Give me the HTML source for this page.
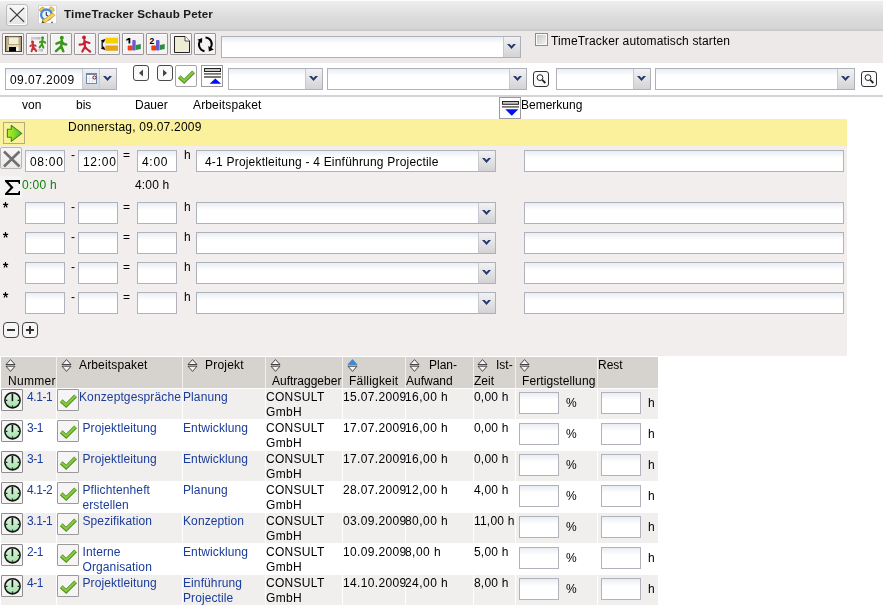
<!DOCTYPE html>
<html><head><meta charset="utf-8">
<style>
*{box-sizing:border-box;margin:0;padding:0}
html,body{width:883px;height:606px;overflow:hidden;background:#fff;font-family:"Liberation Sans",sans-serif;font-size:12px;color:#000}
.a{position:absolute}
.a>svg{position:absolute;left:0;top:0}
.t{position:absolute;white-space:pre;line-height:14px;will-change:transform}
.trg{position:absolute;right:0;top:0;width:17px;height:100%;border-left:1px solid #c6c9cf;background:linear-gradient(#f2f2f4,#d3d3d7)}
.trg svg{position:absolute;left:0;top:0}
.lnk{color:#1a3c9a}
</style></head><body>

<div class="a" style="left:0px;top:0px;width:883px;height:31px;background:linear-gradient(#fcfcfc 0,#fcfcfc 1px,#eeeeee 1px,#dcdcdc 17px,#d5d5d5 29px,#cbcbcb 29px,#cbcbcb 31px);"></div>
<div class="a" style="left:6px;top:4px;width:22px;height:22px;border:1px solid #bdbdbd;border-radius:3px;background:linear-gradient(#f8f8f8,#e4e4e4);box-shadow:inset -1px -1px 0 #fff;"><svg width="20" height="20"><path d="M2.9 2.9 L17.1 16.9 M17.1 2.9 L2.9 16.9" stroke="#3a3a3a" stroke-width="1.3"/></svg></div>
<div class="a" style="left:38px;top:5px;width:19px;height:19px;background:#fff;border:1px solid #d4d4d4;"><svg width="17" height="17" viewBox="1 1 17 17"><ellipse cx="3.9" cy="4.4" rx="2.7" ry="1.8" transform="rotate(-40 3.9 4.4)" fill="#f2c850" stroke="#d0a030" stroke-width="0.7"/><ellipse cx="13.8" cy="4.2" rx="2.7" ry="1.8" transform="rotate(40 13.8 4.2)" fill="#f2c850" stroke="#d0a030" stroke-width="0.7"/><circle cx="8.4" cy="9.8" r="5.3" fill="#eef6fe" stroke="#4a8ad0" stroke-width="2.3"/><path d="M8.3 6.8 V10 L10 11.2" stroke="#334" stroke-width="1.1" fill="none"/><path d="M4.4 15.6 L14.8 8 L16.8 10.4 L6.6 18 Z" fill="#f6d65a" stroke="#d09a28" stroke-width="0.8"/><path d="M4.4 15.6 L3.4 18.6 L6.6 18 Z" fill="#5a4a3a"/><circle cx="14" cy="17.5" r="0.9" fill="#556"/></svg></div>
<div class="t" style="left:64px;top:7px;font-size:12px;font-weight:bold;color:#1a1a1a;letter-spacing:0.15px;font-size:11.6px">TimeTracker Schaub Peter</div>
<div class="a" style="left:0px;top:31px;width:883px;height:32px;background:#ece9e8;"></div>
<div class="a" style="left:2px;top:33px;width:22px;height:22px;border:1px solid #999799;border-radius:1px;background:#f4f2f2;box-shadow:inset 1px 1px 0 #fff;"><svg width="20" height="20"><defs><linearGradient id="fl" x1="0" x2="1"><stop offset="0" stop-color="#9a8a60"/><stop offset="0.22" stop-color="#e4dcbc"/><stop offset="0.78" stop-color="#e4dcbc"/><stop offset="1" stop-color="#9a8a60"/></linearGradient></defs><rect x="2.5" y="2.5" width="16" height="15" fill="url(#fl)" stroke="#4a4030" stroke-width="1"/><rect x="5.5" y="3" width="10.5" height="7.5" fill="#f2eed8" stroke="#a89870" stroke-width="0.8"/><rect x="6" y="13" width="7" height="4.5" fill="#000"/><rect x="13.3" y="13.3" width="2" height="3.5" fill="#fff"/></svg></div>
<div class="a" style="left:26px;top:33px;width:22px;height:22px;border:1px solid #999799;border-radius:1px;background:#f4f2f2;box-shadow:inset 1px 1px 0 #fff;"><svg width="20" height="20"><defs><linearGradient id="gb" x1="0" x2="1"><stop offset="0" stop-color="#d8d8d8"/><stop offset="1" stop-color="#b8b8b8"/></linearGradient></defs><rect x="4" y="3" width="9.5" height="2.5" fill="url(#gb)"/><rect x="4" y="3" width="1.5" height="6" fill="#ccc"/><rect x="11" y="15" width="5" height="2.5" fill="url(#gb)"/><g stroke="#c83038" stroke-width="2" fill="none" stroke-linecap="round" stroke-linejoin="round"><circle cx="5.6" cy="8" r="1.5" fill="#c83038" stroke="none"/><path d="M5.7 9.6 L6 13 L4.6 17.2 M6 13 L9.3 17 M3.4 12 L5.8 10.6 L8.6 11.8"/></g><g stroke="#3c9a1c" stroke-width="2" fill="none" stroke-linecap="round" stroke-linejoin="round"><circle cx="15.6" cy="3.8" r="1.5" fill="#3c9a1c" stroke="none"/><path d="M15.5 5.4 L15 10 L12.6 13.4 M15 10 L16.4 13.6 M13 8.2 L15.4 6.8 L18.2 8.6"/></g></svg></div>
<div class="a" style="left:50px;top:33px;width:22px;height:22px;border:1px solid #999799;border-radius:1px;background:#f4f2f2;box-shadow:inset 1px 1px 0 #fff;"><svg width="20" height="20"><circle cx="10.8" cy="3.8" r="2" fill="#3a9818"/><g stroke="#3a9818" stroke-width="2.5" fill="none" stroke-linecap="round" stroke-linejoin="round"><path d="M10.8 6.2 L10.2 12.3 L5 17.2 M10.2 12.3 L12.3 17.2 M5.4 9.6 L10.6 7.6 L13 10 L15.2 10.4"/></g></svg></div>
<div class="a" style="left:74px;top:33px;width:22px;height:22px;border:1px solid #999799;border-radius:1px;background:#f4f2f2;box-shadow:inset 1px 1px 0 #fff;"><svg width="20" height="20"><circle cx="9" cy="3.5" r="1.9" fill="#c42030"/><g stroke="#c42030" stroke-width="2.1" fill="none" stroke-linecap="round" stroke-linejoin="round"><path d="M9.4 6 L10 12.8 L7.3 17.6 M10 12.8 L11.8 15 L15.2 17.6 M4.6 10.6 L8 10.2 L9.6 7.6 L14.5 9"/></g></svg></div>
<div class="a" style="left:98px;top:33px;width:22px;height:22px;border:1px solid #999799;border-radius:1px;background:#f4f2f2;box-shadow:inset 1px 1px 0 #fff;"><svg width="20" height="20"><rect x="6.4" y="3.7" width="12.6" height="5.8" fill="#f8d000"/><rect x="6.4" y="11.5" width="12.6" height="5.3" fill="#e0a818"/><path d="M3.2 6.5 V14.5" stroke="#222" stroke-width="1.4" fill="none"/><path d="M2 6.3 L6.4 5 L4.8 8.8Z M2 14.7 L6.4 16 L4.8 12.2Z" fill="#000"/></svg></div>
<div class="a" style="left:122px;top:33px;width:22px;height:22px;border:1px solid #999799;border-radius:1px;background:#f4f2f2;box-shadow:inset 1px 1px 0 #fff;"><svg width="20" height="20"><path d="M3.3 5.2 L5.6 3.9 H7.3 V9.6 H5.5 V6 L3.3 6.8Z" fill="#000"/><rect x="4.7" y="11.5" width="5" height="5" rx="1" fill="#f04010"/><rect x="9.3" y="6" width="3.4" height="10.5" rx="1" fill="#6a5ad0"/><path d="M12.9 11 L17.8 9.9 V15 L12.9 16Z" fill="#2a9040"/></svg></div>
<div class="a" style="left:146px;top:33px;width:22px;height:22px;border:1px solid #999799;border-radius:1px;background:#f4f2f2;box-shadow:inset 1px 1px 0 #fff;"><svg width="20" height="20"><text x="2.6" y="9.6" font-family="Liberation Sans" font-weight="bold" font-size="8.5" fill="#000">2</text><rect x="4.3" y="11.5" width="5" height="5" rx="1" fill="#f04010"/><rect x="9" y="6" width="3.5" height="10.5" rx="1" fill="#6a5ad0"/><path d="M12.8 11 L17.7 10 V15 L12.8 16Z" fill="#2a9040"/></svg></div>
<div class="a" style="left:170px;top:33px;width:22px;height:22px;border:1px solid #999799;border-radius:1px;background:#f4f2f2;box-shadow:inset 1px 1px 0 #fff;"><svg width="20" height="20"><path d="M3.5 2.5 H14 L18.5 7 V18.5 H3.5 Z" fill="#ededd5" stroke="#222" stroke-width="1"/><path d="M14 2.5 V7 H18.5" fill="#fff" stroke="#222" stroke-width="0.8"/></svg></div>
<div class="a" style="left:194px;top:33px;width:22px;height:22px;border:1px solid #999799;border-radius:1px;background:#f4f2f2;box-shadow:inset 1px 1px 0 #fff;"><svg width="20" height="20"><g fill="none" stroke="#000" stroke-width="2"><path d="M5.5 6.5 A6.6 6.6 0 0 0 9.5 17.2"/><path d="M10.5 3.4 A6.6 6.6 0 0 1 15.3 14"/></g><path d="M2.4 5.7 L7.2 3.9 L7 8.9Z" fill="#000"/><path d="M13.3 12 L18.8 15.4 L13.9 17.4Z" fill="#000"/></svg></div>
<div class="a" style="left:221px;top:36px;width:300px;height:22px;border:1px solid #adb1ba;background:linear-gradient(#e9edf3,#fff 35%);"><div class="trg"><svg width="16" height="20"><path d="M3 7 H5.6 L7.5 8.9 L9.4 7 H12 L7.5 12Z" fill="#22396b"/></svg></div></div>
<div class="a" style="left:535px;top:33px;width:13px;height:13px;border:1px solid #8c8c8c;box-shadow:inset 0 0 0 1px #fafafa;background:linear-gradient(135deg,#c4c4c4,#f6f6f6);"></div>
<div class="t" style="left:551px;top:34px;font-size:12px;letter-spacing:0.15px">TimeTracker automatisch starten</div>
<div class="a" style="left:0px;top:63px;width:883px;height:32px;background:#fff;"></div>
<div class="a" style="left:0px;top:95px;width:883px;height:2px;background:#d4d4d4;"></div>
<div class="a" style="left:5px;top:68px;width:112px;height:22px;border:1px solid #adb1ba;background:linear-gradient(#e9edf3,#fff 35%);"><div class="t" style="left:4px;top:4px;font-size:12px;letter-spacing:0.45px">09.07.2009</div><div class="a" style="left:76px;top:0;width:17px;height:20px;border-left:1px solid #c6c9cf;background:linear-gradient(#eef0f4,#d3d3d7)"><svg width="17" height="20"><rect x="3.5" y="4.5" width="10" height="10" fill="#fff" stroke="#7088a8" stroke-width="1"/><rect x="3.5" y="4" width="10" height="2" fill="#7088a8"/><path d="M6.5 7 V14 M9.5 7 V14 M4 9.5 H13 M4 12 H13" stroke="#dde" stroke-width="0.8"/><circle cx="11.5" cy="8.5" r="1.6" fill="#fff" stroke="#701010" stroke-width="1"/></svg></div><div class="trg"><svg width="16" height="20"><path d="M3 7 H5.6 L7.5 8.9 L9.4 7 H12 L7.5 12Z" fill="#22396b"/></svg></div></div>
<div class="a" style="left:133px;top:65px;width:16px;height:16px;border:1px solid #4a4a4a;border-radius:3px;background:#fafafa;"><svg width="14" height="14" style="left:0;top:0"><path d="M10 4.5 L6 8 L10 11.5Z" transform="translate(-1,-1)" fill="#454545"/></svg></div>
<div class="a" style="left:157px;top:65px;width:16px;height:16px;border:1px solid #4a4a4a;border-radius:3px;background:#fafafa;"><svg width="14" height="14" style="left:0;top:0"><path d="M6 4.5 L10 8 L6 11.5Z" transform="translate(-1,-1)" fill="#454545"/></svg></div>
<div class="a" style="left:175px;top:65px;width:22px;height:22px;border:1px solid #a4a4a8;border-radius:2px;background:#fff;"><svg width="21" height="21"><path d="M3.2 10.8 L8.2 15.4 L17.6 5.9" fill="none" stroke="#4e8e22" stroke-width="3.9" stroke-linejoin="miter" stroke-linecap="butt"/><path d="M3.6 10.9 L8.2 15.1 L17.3 6.1" fill="none" stroke="#86cc3a" stroke-width="2.1" stroke-linejoin="miter" stroke-linecap="butt"/></svg></div>
<div class="a" style="left:201px;top:65px;width:22px;height:22px;border:1px solid #9a9a9e;background:#fff;"><svg width="22" height="22"><rect x="2.5" y="2.5" width="16" height="3" fill="#c8c8c8" stroke="#222" stroke-width="1"/><rect x="2" y="7.1" width="17" height="1.6" fill="#6a6a62"/><rect x="2" y="10.1" width="17" height="1.8" fill="#6a6a62"/><path d="M7.6 17.7 L19.1 17.7 L13.3 12.6Z" fill="#0010f0"/></svg></div>
<div class="a" style="left:228px;top:68px;width:95px;height:22px;border:1px solid #adb1ba;background:linear-gradient(#e9edf3,#fff 35%);"><div class="trg"><svg width="16" height="20"><path d="M3 7 H5.6 L7.5 8.9 L9.4 7 H12 L7.5 12Z" fill="#22396b"/></svg></div></div>
<div class="a" style="left:327px;top:68px;width:200px;height:22px;border:1px solid #adb1ba;background:linear-gradient(#e9edf3,#fff 35%);"><div class="trg"><svg width="16" height="20"><path d="M3 7 H5.6 L7.5 8.9 L9.4 7 H12 L7.5 12Z" fill="#22396b"/></svg></div></div>
<div class="a" style="left:533px;top:71px;width:16px;height:16px;border:1px solid #333;border-radius:3px;background:#fafafa;"><svg width="14" height="14"><circle cx="6" cy="5.6" r="2.9" fill="#fff" stroke="#222" stroke-width="1"/><path d="M8.2 7.8 L11.4 11" stroke="#222" stroke-width="1.8"/></svg></div>
<div class="a" style="left:556px;top:68px;width:95px;height:22px;border:1px solid #adb1ba;background:linear-gradient(#e9edf3,#fff 35%);"><div class="trg"><svg width="16" height="20"><path d="M3 7 H5.6 L7.5 8.9 L9.4 7 H12 L7.5 12Z" fill="#22396b"/></svg></div></div>
<div class="a" style="left:655px;top:68px;width:200px;height:22px;border:1px solid #adb1ba;background:linear-gradient(#e9edf3,#fff 35%);"><div class="trg"><svg width="16" height="20"><path d="M3 7 H5.6 L7.5 8.9 L9.4 7 H12 L7.5 12Z" fill="#22396b"/></svg></div></div>
<div class="a" style="left:861px;top:71px;width:16px;height:16px;border:1px solid #333;border-radius:3px;background:#fafafa;"><svg width="14" height="14"><circle cx="6" cy="5.6" r="2.9" fill="#fff" stroke="#222" stroke-width="1"/><path d="M8.2 7.8 L11.4 11" stroke="#222" stroke-width="1.8"/></svg></div>
<div class="t" style="left:22px;top:98px;font-size:12px;">von</div>
<div class="t" style="left:76px;top:98px;font-size:12px;">bis</div>
<div class="t" style="left:135px;top:98px;font-size:12px;">Dauer</div>
<div class="t" style="left:193px;top:98px;font-size:12px;letter-spacing:0.15px">Arbeitspaket</div>
<div class="a" style="left:499px;top:97px;width:22px;height:22px;border:1px solid #9a9a9e;background:#fff;"><svg width="22" height="22"><rect x="2.5" y="3.5" width="16" height="2.8" fill="#c8c8c8" stroke="#222" stroke-width="1"/><rect x="2" y="8.1" width="17" height="1.6" fill="#6a6a62"/><path d="M5.3 11.3 L18.3 11.3 L11.8 17.8Z" fill="#0010f0"/></svg></div>
<div class="t" style="left:521px;top:98px;font-size:12px;">Bemerkung</div>
<div class="a" style="left:0px;top:119px;width:847px;height:27px;background:#fbf09b;"></div>
<div class="a" style="left:3px;top:122px;width:22px;height:22px;border:1px solid #b4ac80;"><svg width="22" height="22"><defs><linearGradient id="ga" x1="0" x2="1"><stop offset="0" stop-color="#b8f020"/><stop offset="1" stop-color="#50c030"/></linearGradient></defs><path d="M3.4 6.3 H7.3 V2.4 L17.7 10.4 L7.3 18.4 V14.2 H3.4 Z" fill="url(#ga)" stroke="#3a8a20" stroke-width="1.1" stroke-linejoin="round"/></svg></div>
<div class="t" style="left:68px;top:120px;font-size:12px;letter-spacing:0.22px">Donnerstag, 09.07.2009</div>
<div class="a" style="left:0px;top:146px;width:847px;height:210px;background:#f2eeee;"></div>
<div class="a" style="left:0px;top:147px;width:22px;height:22px;border:1px solid #b8b6b6;border-radius:2px;background:linear-gradient(#f8f6f6,#ebe8e8);"><svg width="22" height="22"><path d="M3 3.5 L18.5 18.5 M18.5 3.5 L3 18.5" stroke="#707070" stroke-width="2.6"/></svg></div>
<div class="a" style="left:25px;top:150px;width:40px;height:22px;border:1px solid #b0b3bb;background:linear-gradient(#e9edf3,#fff 35%);"><div class="t" style="left:4px;top:4px;letter-spacing:0.7px">08:00</div></div>
<div class="t" style="left:71px;top:148px;font-size:12px;">-</div>
<div class="a" style="left:78px;top:150px;width:40px;height:22px;border:1px solid #b0b3bb;background:linear-gradient(#e9edf3,#fff 35%);"><div class="t" style="left:4px;top:4px;letter-spacing:0.7px">12:00</div></div>
<div class="t" style="left:123px;top:148px;font-size:12px;">=</div>
<div class="a" style="left:137px;top:150px;width:40px;height:22px;border:1px solid #b0b3bb;background:linear-gradient(#e9edf3,#fff 35%);"><div class="t" style="left:4px;top:4px;letter-spacing:0.7px">4:00</div></div>
<div class="t" style="left:184px;top:148px;font-size:12px;letter-spacing:0">h</div>
<div class="a" style="left:196px;top:150px;width:300px;height:22px;border:1px solid #adb1ba;background:linear-gradient(#e9edf3,#fff 35%);"><div class="t" style="left:8px;top:4px;letter-spacing:0.2px">4-1 Projektleitung - 4 Einführung Projectile</div><div class="trg"><svg width="16" height="20"><path d="M3 7 H5.6 L7.5 8.9 L9.4 7 H12 L7.5 12Z" fill="#22396b"/></svg></div></div>
<div class="a" style="left:524px;top:150px;width:320px;height:22px;border:1px solid #b0b3bb;background:linear-gradient(#e9edf3,#fff 35%);"></div>
<div class="a" style="left:0px;top:176px;width:22px;height:22px;background:#f5f4f4;"><svg width="22" height="22" viewBox="0 176 22 22"><path d="M5 180 H20 V184 H19 L18 182 H8.5 L13.5 187.5 L8 193 H18 L19 191 H20 V195 H5 V193.5 L10.5 187.5 L5 181.5Z" fill="#000"/></svg></div>
<div class="t" style="left:22px;top:178px;font-size:12px;color:#0e820e;letter-spacing:0.25px">0:00 h</div>
<div class="t" style="left:135px;top:178px;font-size:12px;letter-spacing:0.15px">4:00 h</div>
<div class="a" style="left:3px;top:202px;width:6px;height:6px;"><svg width="6" height="6"><path d="M2.5 0 V2.6 M0 2.4 H5.2 M2.5 2.6 L1 5.4 M2.5 2.6 L4.2 5.4" stroke="#000" stroke-width="1.1" fill="none"/></svg></div>
<div class="a" style="left:25px;top:202px;width:40px;height:22px;border:1px solid #b0b3bb;background:linear-gradient(#e9edf3,#fff 35%);"></div>
<div class="t" style="left:71px;top:200px;font-size:12px;">-</div>
<div class="a" style="left:78px;top:202px;width:40px;height:22px;border:1px solid #b0b3bb;background:linear-gradient(#e9edf3,#fff 35%);"></div>
<div class="t" style="left:123px;top:200px;font-size:12px;">=</div>
<div class="a" style="left:137px;top:202px;width:40px;height:22px;border:1px solid #b0b3bb;background:linear-gradient(#e9edf3,#fff 35%);"></div>
<div class="t" style="left:184px;top:200px;font-size:12px;letter-spacing:0">h</div>
<div class="a" style="left:196px;top:202px;width:300px;height:22px;border:1px solid #adb1ba;background:linear-gradient(#e9edf3,#fff 35%);"><div class="trg"><svg width="16" height="20"><path d="M3 7 H5.6 L7.5 8.9 L9.4 7 H12 L7.5 12Z" fill="#22396b"/></svg></div></div>
<div class="a" style="left:524px;top:202px;width:320px;height:22px;border:1px solid #b0b3bb;background:linear-gradient(#e9edf3,#fff 35%);"></div>
<div class="a" style="left:3px;top:232px;width:6px;height:6px;"><svg width="6" height="6"><path d="M2.5 0 V2.6 M0 2.4 H5.2 M2.5 2.6 L1 5.4 M2.5 2.6 L4.2 5.4" stroke="#000" stroke-width="1.1" fill="none"/></svg></div>
<div class="a" style="left:25px;top:232px;width:40px;height:22px;border:1px solid #b0b3bb;background:linear-gradient(#e9edf3,#fff 35%);"></div>
<div class="t" style="left:71px;top:230px;font-size:12px;">-</div>
<div class="a" style="left:78px;top:232px;width:40px;height:22px;border:1px solid #b0b3bb;background:linear-gradient(#e9edf3,#fff 35%);"></div>
<div class="t" style="left:123px;top:230px;font-size:12px;">=</div>
<div class="a" style="left:137px;top:232px;width:40px;height:22px;border:1px solid #b0b3bb;background:linear-gradient(#e9edf3,#fff 35%);"></div>
<div class="t" style="left:184px;top:230px;font-size:12px;letter-spacing:0">h</div>
<div class="a" style="left:196px;top:232px;width:300px;height:22px;border:1px solid #adb1ba;background:linear-gradient(#e9edf3,#fff 35%);"><div class="trg"><svg width="16" height="20"><path d="M3 7 H5.6 L7.5 8.9 L9.4 7 H12 L7.5 12Z" fill="#22396b"/></svg></div></div>
<div class="a" style="left:524px;top:232px;width:320px;height:22px;border:1px solid #b0b3bb;background:linear-gradient(#e9edf3,#fff 35%);"></div>
<div class="a" style="left:3px;top:262px;width:6px;height:6px;"><svg width="6" height="6"><path d="M2.5 0 V2.6 M0 2.4 H5.2 M2.5 2.6 L1 5.4 M2.5 2.6 L4.2 5.4" stroke="#000" stroke-width="1.1" fill="none"/></svg></div>
<div class="a" style="left:25px;top:262px;width:40px;height:22px;border:1px solid #b0b3bb;background:linear-gradient(#e9edf3,#fff 35%);"></div>
<div class="t" style="left:71px;top:260px;font-size:12px;">-</div>
<div class="a" style="left:78px;top:262px;width:40px;height:22px;border:1px solid #b0b3bb;background:linear-gradient(#e9edf3,#fff 35%);"></div>
<div class="t" style="left:123px;top:260px;font-size:12px;">=</div>
<div class="a" style="left:137px;top:262px;width:40px;height:22px;border:1px solid #b0b3bb;background:linear-gradient(#e9edf3,#fff 35%);"></div>
<div class="t" style="left:184px;top:260px;font-size:12px;letter-spacing:0">h</div>
<div class="a" style="left:196px;top:262px;width:300px;height:22px;border:1px solid #adb1ba;background:linear-gradient(#e9edf3,#fff 35%);"><div class="trg"><svg width="16" height="20"><path d="M3 7 H5.6 L7.5 8.9 L9.4 7 H12 L7.5 12Z" fill="#22396b"/></svg></div></div>
<div class="a" style="left:524px;top:262px;width:320px;height:22px;border:1px solid #b0b3bb;background:linear-gradient(#e9edf3,#fff 35%);"></div>
<div class="a" style="left:3px;top:292px;width:6px;height:6px;"><svg width="6" height="6"><path d="M2.5 0 V2.6 M0 2.4 H5.2 M2.5 2.6 L1 5.4 M2.5 2.6 L4.2 5.4" stroke="#000" stroke-width="1.1" fill="none"/></svg></div>
<div class="a" style="left:25px;top:292px;width:40px;height:22px;border:1px solid #b0b3bb;background:linear-gradient(#e9edf3,#fff 35%);"></div>
<div class="t" style="left:71px;top:290px;font-size:12px;">-</div>
<div class="a" style="left:78px;top:292px;width:40px;height:22px;border:1px solid #b0b3bb;background:linear-gradient(#e9edf3,#fff 35%);"></div>
<div class="t" style="left:123px;top:290px;font-size:12px;">=</div>
<div class="a" style="left:137px;top:292px;width:40px;height:22px;border:1px solid #b0b3bb;background:linear-gradient(#e9edf3,#fff 35%);"></div>
<div class="t" style="left:184px;top:290px;font-size:12px;letter-spacing:0">h</div>
<div class="a" style="left:196px;top:292px;width:300px;height:22px;border:1px solid #adb1ba;background:linear-gradient(#e9edf3,#fff 35%);"><div class="trg"><svg width="16" height="20"><path d="M3 7 H5.6 L7.5 8.9 L9.4 7 H12 L7.5 12Z" fill="#22396b"/></svg></div></div>
<div class="a" style="left:524px;top:292px;width:320px;height:22px;border:1px solid #b0b3bb;background:linear-gradient(#e9edf3,#fff 35%);"></div>
<div class="a" style="left:3px;top:322px;width:16px;height:16px;border:1px solid #444;border-radius:4px;background:#f6f6f6;"><svg width="14" height="14"><path d="M3 7 H11" stroke="#333" stroke-width="2"/></svg></div>
<div class="a" style="left:22px;top:322px;width:16px;height:16px;border:1px solid #444;border-radius:4px;background:#f6f6f6;"><svg width="14" height="14"><path d="M3 7 H11 M7 3 V11" stroke="#333" stroke-width="2"/></svg></div>
<div class="a" style="left:1px;top:357px;width:657px;height:31px;background:#d6d2ce;"></div>
<div class="a" style="left:56px;top:357px;width:1px;height:31px;background:#f0eeee;"></div>
<div class="a" style="left:182px;top:357px;width:1px;height:31px;background:#f0eeee;"></div>
<div class="a" style="left:265px;top:357px;width:1px;height:31px;background:#f0eeee;"></div>
<div class="a" style="left:342px;top:357px;width:1px;height:31px;background:#f0eeee;"></div>
<div class="a" style="left:405px;top:357px;width:1px;height:31px;background:#f0eeee;"></div>
<div class="a" style="left:473px;top:357px;width:1px;height:31px;background:#f0eeee;"></div>
<div class="a" style="left:515px;top:357px;width:1px;height:31px;background:#f0eeee;"></div>
<div class="a" style="left:597px;top:357px;width:1px;height:31px;background:#f0eeee;"></div>
<div class="a" style="left:5px;top:359px;width:11px;height:14px"><svg width="11" height="14"><path d="M1 5.5 L5.5 0.6 L10 5.5Z M1 7.2 H10 L5.5 12.4Z" fill="#f4f4f4" stroke="#333" stroke-width="0.9" stroke-linejoin="miter"/></svg></div>
<div class="t" style="left:8px;top:374px;font-size:12px;letter-spacing:0.3px">Nummer</div>
<div class="a" style="left:61px;top:359px;width:11px;height:14px"><svg width="11" height="14"><path d="M1 5.5 L5.5 0.6 L10 5.5Z M1 7.2 H10 L5.5 12.4Z" fill="#f4f4f4" stroke="#333" stroke-width="0.9" stroke-linejoin="miter"/></svg></div>
<div class="t" style="left:79px;top:358px;font-size:12px;letter-spacing:0.15px">Arbeitspaket</div>
<div class="a" style="left:187px;top:359px;width:11px;height:14px"><svg width="11" height="14"><path d="M1 5.5 L5.5 0.6 L10 5.5Z M1 7.2 H10 L5.5 12.4Z" fill="#f4f4f4" stroke="#333" stroke-width="0.9" stroke-linejoin="miter"/></svg></div>
<div class="t" style="left:205px;top:358px;font-size:12px;letter-spacing:0.2px">Projekt</div>
<div class="a" style="left:270px;top:359px;width:11px;height:14px"><svg width="11" height="14"><path d="M1 5.5 L5.5 0.6 L10 5.5Z M1 7.2 H10 L5.5 12.4Z" fill="#f4f4f4" stroke="#333" stroke-width="0.9" stroke-linejoin="miter"/></svg></div>
<div class="t" style="left:272px;top:374px;font-size:12px;">Auftraggeber</div>
<div class="a" style="left:347px;top:359px;width:11px;height:14px"><svg width="11" height="14"><path d="M1 5.5 L5.5 0.6 L10 5.5Z" fill="#3a88d8" stroke="#4a88c8" stroke-width="0.9"/><path d="M1 7.2 H10 L5.5 12.4Z" fill="#f4f4f4" stroke="#333" stroke-width="0.9"/></svg></div>
<div class="t" style="left:349px;top:374px;font-size:12px;letter-spacing:0.2px">Fälligkeit</div>
<div class="a" style="left:409px;top:359px;width:11px;height:14px"><svg width="11" height="14"><path d="M1 5.5 L5.5 0.6 L10 5.5Z M1 7.2 H10 L5.5 12.4Z" fill="#f4f4f4" stroke="#333" stroke-width="0.9" stroke-linejoin="miter"/></svg></div>
<div class="t" style="left:429px;top:358px;font-size:12px;">Plan-</div>
<div class="t" style="left:406px;top:374px;font-size:12px;">Aufwand</div>
<div class="a" style="left:477px;top:359px;width:11px;height:14px"><svg width="11" height="14"><path d="M1 5.5 L5.5 0.6 L10 5.5Z M1 7.2 H10 L5.5 12.4Z" fill="#f4f4f4" stroke="#333" stroke-width="0.9" stroke-linejoin="miter"/></svg></div>
<div class="t" style="left:496px;top:358px;font-size:12px;">Ist-</div>
<div class="t" style="left:474px;top:374px;font-size:12px;">Zeit</div>
<div class="a" style="left:519px;top:359px;width:11px;height:14px"><svg width="11" height="14"><path d="M1 5.5 L5.5 0.6 L10 5.5Z M1 7.2 H10 L5.5 12.4Z" fill="#f4f4f4" stroke="#333" stroke-width="0.9" stroke-linejoin="miter"/></svg></div>
<div class="t" style="left:522px;top:374px;font-size:12px;letter-spacing:0.1px">Fertigstellung</div>
<div class="t" style="left:598px;top:358px;font-size:12px;">Rest</div>
<div class="a" style="left:1px;top:389px;width:657px;height:30px;background:#f1eeee;"></div>
<div class="a" style="left:56px;top:389px;width:1px;height:30px;background:#fff;"></div>
<div class="a" style="left:182px;top:389px;width:1px;height:30px;background:#fff;"></div>
<div class="a" style="left:265px;top:389px;width:1px;height:30px;background:#fff;"></div>
<div class="a" style="left:342px;top:389px;width:1px;height:30px;background:#fff;"></div>
<div class="a" style="left:405px;top:389px;width:1px;height:30px;background:#fff;"></div>
<div class="a" style="left:473px;top:389px;width:1px;height:30px;background:#fff;"></div>
<div class="a" style="left:515px;top:389px;width:1px;height:30px;background:#fff;"></div>
<div class="a" style="left:597px;top:389px;width:1px;height:30px;background:#fff;"></div>
<div class="a" style="left:1px;top:451px;width:657px;height:30px;background:#f1eeee;"></div>
<div class="a" style="left:56px;top:451px;width:1px;height:30px;background:#fff;"></div>
<div class="a" style="left:182px;top:451px;width:1px;height:30px;background:#fff;"></div>
<div class="a" style="left:265px;top:451px;width:1px;height:30px;background:#fff;"></div>
<div class="a" style="left:342px;top:451px;width:1px;height:30px;background:#fff;"></div>
<div class="a" style="left:405px;top:451px;width:1px;height:30px;background:#fff;"></div>
<div class="a" style="left:473px;top:451px;width:1px;height:30px;background:#fff;"></div>
<div class="a" style="left:515px;top:451px;width:1px;height:30px;background:#fff;"></div>
<div class="a" style="left:597px;top:451px;width:1px;height:30px;background:#fff;"></div>
<div class="a" style="left:1px;top:513px;width:657px;height:30px;background:#f1eeee;"></div>
<div class="a" style="left:56px;top:513px;width:1px;height:30px;background:#fff;"></div>
<div class="a" style="left:182px;top:513px;width:1px;height:30px;background:#fff;"></div>
<div class="a" style="left:265px;top:513px;width:1px;height:30px;background:#fff;"></div>
<div class="a" style="left:342px;top:513px;width:1px;height:30px;background:#fff;"></div>
<div class="a" style="left:405px;top:513px;width:1px;height:30px;background:#fff;"></div>
<div class="a" style="left:473px;top:513px;width:1px;height:30px;background:#fff;"></div>
<div class="a" style="left:515px;top:513px;width:1px;height:30px;background:#fff;"></div>
<div class="a" style="left:597px;top:513px;width:1px;height:30px;background:#fff;"></div>
<div class="a" style="left:1px;top:575px;width:657px;height:30px;background:#f1eeee;"></div>
<div class="a" style="left:56px;top:575px;width:1px;height:30px;background:#fff;"></div>
<div class="a" style="left:182px;top:575px;width:1px;height:30px;background:#fff;"></div>
<div class="a" style="left:265px;top:575px;width:1px;height:30px;background:#fff;"></div>
<div class="a" style="left:342px;top:575px;width:1px;height:30px;background:#fff;"></div>
<div class="a" style="left:405px;top:575px;width:1px;height:30px;background:#fff;"></div>
<div class="a" style="left:473px;top:575px;width:1px;height:30px;background:#fff;"></div>
<div class="a" style="left:515px;top:575px;width:1px;height:30px;background:#fff;"></div>
<div class="a" style="left:597px;top:575px;width:1px;height:30px;background:#fff;"></div>
<div class="a" style="left:1px;top:389px;width:22px;height:22px;border:1px solid #8e8e8e;border-radius:1px;background:#f6f4f4;"><svg width="21" height="21"><defs><linearGradient id="gc" x1="0" y1="0" x2="0" y2="1"><stop offset="0" stop-color="#e2f4e2"/><stop offset="1" stop-color="#a0e2a8"/></linearGradient></defs><circle cx="10.5" cy="10.3" r="7.6" fill="url(#gc)" stroke="#141414" stroke-width="1.6"/><path d="M10.4 3.8 V11.2" stroke="#111" stroke-width="1.6"/><path d="M15.6 10.3 H17 M4 10.3 H5.4 M10.5 15.4 V16.8" stroke="#1a1a1a" stroke-width="1.3"/></svg></div>
<div class="t" style="left:27px;top:390px;font-size:12px;color:#1a3c9a;letter-spacing:-0.4px">4.1-1</div>
<div class="a" style="left:57px;top:389px;width:22px;height:22px;border:1px solid #9a9a9a;border-radius:1px;background:#f6f4f4;"><svg width="21" height="21"><path d="M3.2 10.8 L8.2 15.4 L17.6 5.9" fill="none" stroke="#4e8e22" stroke-width="3.9" stroke-linejoin="miter" stroke-linecap="butt"/><path d="M3.6 10.9 L8.2 15.1 L17.3 6.1" fill="none" stroke="#86cc3a" stroke-width="2.1" stroke-linejoin="miter" stroke-linecap="butt"/></svg></div>
<div class="t" style="left:79px;top:390px;font-size:12px;color:#1a3c9a;letter-spacing:0.12px">Konzeptgespräche</div>
<div class="t" style="left:183px;top:390px;font-size:12px;color:#1a3c9a;letter-spacing:0.1px">Planung</div>
<div class="t" style="left:266px;top:390px;font-size:12px;letter-spacing:0.3px">CONSULT</div>
<div class="t" style="left:266px;top:405px;font-size:12px;letter-spacing:0.3px">GmbH</div>
<div class="t" style="left:343px;top:390px;font-size:12px;letter-spacing:0.35px">15.07.2009</div>
<div class="t" style="left:405px;top:390px;font-size:12px;letter-spacing:0.45px">16,00 h</div>
<div class="t" style="left:474px;top:390px;font-size:12px;letter-spacing:0.2px">0,00 h</div>
<div class="a" style="left:519px;top:392px;width:40px;height:22px;border:1px solid #b0b3bb;background:linear-gradient(#e9edf3,#fff 35%);"></div>
<div class="t" style="left:566px;top:396px;font-size:12px;">%</div>
<div class="a" style="left:601px;top:392px;width:40px;height:22px;border:1px solid #b0b3bb;background:linear-gradient(#e9edf3,#fff 35%);"></div>
<div class="t" style="left:648px;top:396px;font-size:12px;">h</div>
<div class="a" style="left:1px;top:420px;width:22px;height:22px;border:1px solid #8e8e8e;border-radius:1px;background:#f6f4f4;"><svg width="21" height="21"><defs><linearGradient id="gc" x1="0" y1="0" x2="0" y2="1"><stop offset="0" stop-color="#e2f4e2"/><stop offset="1" stop-color="#a0e2a8"/></linearGradient></defs><circle cx="10.5" cy="10.3" r="7.6" fill="url(#gc)" stroke="#141414" stroke-width="1.6"/><path d="M10.4 3.8 V11.2" stroke="#111" stroke-width="1.6"/><path d="M15.6 10.3 H17 M4 10.3 H5.4 M10.5 15.4 V16.8" stroke="#1a1a1a" stroke-width="1.3"/></svg></div>
<div class="t" style="left:27px;top:421px;font-size:12px;color:#1a3c9a;letter-spacing:-0.4px">3-1</div>
<div class="a" style="left:57px;top:420px;width:22px;height:22px;border:1px solid #9a9a9a;border-radius:1px;background:#f6f4f4;"><svg width="21" height="21"><path d="M3.2 10.8 L8.2 15.4 L17.6 5.9" fill="none" stroke="#4e8e22" stroke-width="3.9" stroke-linejoin="miter" stroke-linecap="butt"/><path d="M3.6 10.9 L8.2 15.1 L17.3 6.1" fill="none" stroke="#86cc3a" stroke-width="2.1" stroke-linejoin="miter" stroke-linecap="butt"/></svg></div>
<div class="t" style="left:79px;top:421px;font-size:12px;color:#1a3c9a;letter-spacing:0.12px"> Projektleitung</div>
<div class="t" style="left:183px;top:421px;font-size:12px;color:#1a3c9a;letter-spacing:0.1px">Entwicklung</div>
<div class="t" style="left:266px;top:421px;font-size:12px;letter-spacing:0.3px">CONSULT</div>
<div class="t" style="left:266px;top:436px;font-size:12px;letter-spacing:0.3px">GmbH</div>
<div class="t" style="left:343px;top:421px;font-size:12px;letter-spacing:0.35px">17.07.2009</div>
<div class="t" style="left:405px;top:421px;font-size:12px;letter-spacing:0.45px">16,00 h</div>
<div class="t" style="left:474px;top:421px;font-size:12px;letter-spacing:0.2px">0,00 h</div>
<div class="a" style="left:519px;top:423px;width:40px;height:22px;border:1px solid #b0b3bb;background:linear-gradient(#e9edf3,#fff 35%);"></div>
<div class="t" style="left:566px;top:427px;font-size:12px;">%</div>
<div class="a" style="left:601px;top:423px;width:40px;height:22px;border:1px solid #b0b3bb;background:linear-gradient(#e9edf3,#fff 35%);"></div>
<div class="t" style="left:648px;top:427px;font-size:12px;">h</div>
<div class="a" style="left:1px;top:451px;width:22px;height:22px;border:1px solid #8e8e8e;border-radius:1px;background:#f6f4f4;"><svg width="21" height="21"><defs><linearGradient id="gc" x1="0" y1="0" x2="0" y2="1"><stop offset="0" stop-color="#e2f4e2"/><stop offset="1" stop-color="#a0e2a8"/></linearGradient></defs><circle cx="10.5" cy="10.3" r="7.6" fill="url(#gc)" stroke="#141414" stroke-width="1.6"/><path d="M10.4 3.8 V11.2" stroke="#111" stroke-width="1.6"/><path d="M15.6 10.3 H17 M4 10.3 H5.4 M10.5 15.4 V16.8" stroke="#1a1a1a" stroke-width="1.3"/></svg></div>
<div class="t" style="left:27px;top:452px;font-size:12px;color:#1a3c9a;letter-spacing:-0.4px">3-1</div>
<div class="a" style="left:57px;top:451px;width:22px;height:22px;border:1px solid #9a9a9a;border-radius:1px;background:#f6f4f4;"><svg width="21" height="21"><path d="M3.2 10.8 L8.2 15.4 L17.6 5.9" fill="none" stroke="#4e8e22" stroke-width="3.9" stroke-linejoin="miter" stroke-linecap="butt"/><path d="M3.6 10.9 L8.2 15.1 L17.3 6.1" fill="none" stroke="#86cc3a" stroke-width="2.1" stroke-linejoin="miter" stroke-linecap="butt"/></svg></div>
<div class="t" style="left:79px;top:452px;font-size:12px;color:#1a3c9a;letter-spacing:0.12px"> Projektleitung</div>
<div class="t" style="left:183px;top:452px;font-size:12px;color:#1a3c9a;letter-spacing:0.1px">Entwicklung</div>
<div class="t" style="left:266px;top:452px;font-size:12px;letter-spacing:0.3px">CONSULT</div>
<div class="t" style="left:266px;top:467px;font-size:12px;letter-spacing:0.3px">GmbH</div>
<div class="t" style="left:343px;top:452px;font-size:12px;letter-spacing:0.35px">17.07.2009</div>
<div class="t" style="left:405px;top:452px;font-size:12px;letter-spacing:0.45px">16,00 h</div>
<div class="t" style="left:474px;top:452px;font-size:12px;letter-spacing:0.2px">0,00 h</div>
<div class="a" style="left:519px;top:454px;width:40px;height:22px;border:1px solid #b0b3bb;background:linear-gradient(#e9edf3,#fff 35%);"></div>
<div class="t" style="left:566px;top:458px;font-size:12px;">%</div>
<div class="a" style="left:601px;top:454px;width:40px;height:22px;border:1px solid #b0b3bb;background:linear-gradient(#e9edf3,#fff 35%);"></div>
<div class="t" style="left:648px;top:458px;font-size:12px;">h</div>
<div class="a" style="left:1px;top:482px;width:22px;height:22px;border:1px solid #8e8e8e;border-radius:1px;background:#f6f4f4;"><svg width="21" height="21"><defs><linearGradient id="gc" x1="0" y1="0" x2="0" y2="1"><stop offset="0" stop-color="#e2f4e2"/><stop offset="1" stop-color="#a0e2a8"/></linearGradient></defs><circle cx="10.5" cy="10.3" r="7.6" fill="url(#gc)" stroke="#141414" stroke-width="1.6"/><path d="M10.4 3.8 V11.2" stroke="#111" stroke-width="1.6"/><path d="M15.6 10.3 H17 M4 10.3 H5.4 M10.5 15.4 V16.8" stroke="#1a1a1a" stroke-width="1.3"/></svg></div>
<div class="t" style="left:27px;top:483px;font-size:12px;color:#1a3c9a;letter-spacing:-0.4px">4.1-2</div>
<div class="a" style="left:57px;top:482px;width:22px;height:22px;border:1px solid #9a9a9a;border-radius:1px;background:#f6f4f4;"><svg width="21" height="21"><path d="M3.2 10.8 L8.2 15.4 L17.6 5.9" fill="none" stroke="#4e8e22" stroke-width="3.9" stroke-linejoin="miter" stroke-linecap="butt"/><path d="M3.6 10.9 L8.2 15.1 L17.3 6.1" fill="none" stroke="#86cc3a" stroke-width="2.1" stroke-linejoin="miter" stroke-linecap="butt"/></svg></div>
<div class="t" style="left:79px;top:483px;font-size:12px;color:#1a3c9a;letter-spacing:0.12px"> Pflichtenheft</div>
<div class="t" style="left:79px;top:498px;font-size:12px;color:#1a3c9a;letter-spacing:0.12px"> erstellen</div>
<div class="t" style="left:183px;top:483px;font-size:12px;color:#1a3c9a;letter-spacing:0.1px">Planung</div>
<div class="t" style="left:266px;top:483px;font-size:12px;letter-spacing:0.3px">CONSULT</div>
<div class="t" style="left:266px;top:498px;font-size:12px;letter-spacing:0.3px">GmbH</div>
<div class="t" style="left:343px;top:483px;font-size:12px;letter-spacing:0.35px">28.07.2009</div>
<div class="t" style="left:405px;top:483px;font-size:12px;letter-spacing:0.45px">12,00 h</div>
<div class="t" style="left:474px;top:483px;font-size:12px;letter-spacing:0.2px">4,00 h</div>
<div class="a" style="left:519px;top:485px;width:40px;height:22px;border:1px solid #b0b3bb;background:linear-gradient(#e9edf3,#fff 35%);"></div>
<div class="t" style="left:566px;top:489px;font-size:12px;">%</div>
<div class="a" style="left:601px;top:485px;width:40px;height:22px;border:1px solid #b0b3bb;background:linear-gradient(#e9edf3,#fff 35%);"></div>
<div class="t" style="left:648px;top:489px;font-size:12px;">h</div>
<div class="a" style="left:1px;top:513px;width:22px;height:22px;border:1px solid #8e8e8e;border-radius:1px;background:#f6f4f4;"><svg width="21" height="21"><defs><linearGradient id="gc" x1="0" y1="0" x2="0" y2="1"><stop offset="0" stop-color="#e2f4e2"/><stop offset="1" stop-color="#a0e2a8"/></linearGradient></defs><circle cx="10.5" cy="10.3" r="7.6" fill="url(#gc)" stroke="#141414" stroke-width="1.6"/><path d="M10.4 3.8 V11.2" stroke="#111" stroke-width="1.6"/><path d="M15.6 10.3 H17 M4 10.3 H5.4 M10.5 15.4 V16.8" stroke="#1a1a1a" stroke-width="1.3"/></svg></div>
<div class="t" style="left:27px;top:514px;font-size:12px;color:#1a3c9a;letter-spacing:-0.4px">3.1-1</div>
<div class="a" style="left:57px;top:513px;width:22px;height:22px;border:1px solid #9a9a9a;border-radius:1px;background:#f6f4f4;"><svg width="21" height="21"><path d="M3.2 10.8 L8.2 15.4 L17.6 5.9" fill="none" stroke="#4e8e22" stroke-width="3.9" stroke-linejoin="miter" stroke-linecap="butt"/><path d="M3.6 10.9 L8.2 15.1 L17.3 6.1" fill="none" stroke="#86cc3a" stroke-width="2.1" stroke-linejoin="miter" stroke-linecap="butt"/></svg></div>
<div class="t" style="left:79px;top:514px;font-size:12px;color:#1a3c9a;letter-spacing:0.12px"> Spezifikation</div>
<div class="t" style="left:183px;top:514px;font-size:12px;color:#1a3c9a;letter-spacing:0.1px">Konzeption</div>
<div class="t" style="left:266px;top:514px;font-size:12px;letter-spacing:0.3px">CONSULT</div>
<div class="t" style="left:266px;top:529px;font-size:12px;letter-spacing:0.3px">GmbH</div>
<div class="t" style="left:343px;top:514px;font-size:12px;letter-spacing:0.35px">03.09.2009</div>
<div class="t" style="left:405px;top:514px;font-size:12px;letter-spacing:0.45px">80,00 h</div>
<div class="t" style="left:474px;top:514px;font-size:12px;letter-spacing:0.2px">11,00 h</div>
<div class="a" style="left:519px;top:516px;width:40px;height:22px;border:1px solid #b0b3bb;background:linear-gradient(#e9edf3,#fff 35%);"></div>
<div class="t" style="left:566px;top:520px;font-size:12px;">%</div>
<div class="a" style="left:601px;top:516px;width:40px;height:22px;border:1px solid #b0b3bb;background:linear-gradient(#e9edf3,#fff 35%);"></div>
<div class="t" style="left:648px;top:520px;font-size:12px;">h</div>
<div class="a" style="left:1px;top:544px;width:22px;height:22px;border:1px solid #8e8e8e;border-radius:1px;background:#f6f4f4;"><svg width="21" height="21"><defs><linearGradient id="gc" x1="0" y1="0" x2="0" y2="1"><stop offset="0" stop-color="#e2f4e2"/><stop offset="1" stop-color="#a0e2a8"/></linearGradient></defs><circle cx="10.5" cy="10.3" r="7.6" fill="url(#gc)" stroke="#141414" stroke-width="1.6"/><path d="M10.4 3.8 V11.2" stroke="#111" stroke-width="1.6"/><path d="M15.6 10.3 H17 M4 10.3 H5.4 M10.5 15.4 V16.8" stroke="#1a1a1a" stroke-width="1.3"/></svg></div>
<div class="t" style="left:27px;top:545px;font-size:12px;color:#1a3c9a;letter-spacing:-0.4px">2-1</div>
<div class="a" style="left:57px;top:544px;width:22px;height:22px;border:1px solid #9a9a9a;border-radius:1px;background:#f6f4f4;"><svg width="21" height="21"><path d="M3.2 10.8 L8.2 15.4 L17.6 5.9" fill="none" stroke="#4e8e22" stroke-width="3.9" stroke-linejoin="miter" stroke-linecap="butt"/><path d="M3.6 10.9 L8.2 15.1 L17.3 6.1" fill="none" stroke="#86cc3a" stroke-width="2.1" stroke-linejoin="miter" stroke-linecap="butt"/></svg></div>
<div class="t" style="left:79px;top:545px;font-size:12px;color:#1a3c9a;letter-spacing:0.12px"> Interne</div>
<div class="t" style="left:79px;top:560px;font-size:12px;color:#1a3c9a;letter-spacing:0.12px"> Organisation</div>
<div class="t" style="left:183px;top:545px;font-size:12px;color:#1a3c9a;letter-spacing:0.1px">Entwicklung</div>
<div class="t" style="left:266px;top:545px;font-size:12px;letter-spacing:0.3px">CONSULT</div>
<div class="t" style="left:266px;top:560px;font-size:12px;letter-spacing:0.3px">GmbH</div>
<div class="t" style="left:343px;top:545px;font-size:12px;letter-spacing:0.35px">10.09.2009</div>
<div class="t" style="left:405px;top:545px;font-size:12px;letter-spacing:0.45px">8,00 h</div>
<div class="t" style="left:474px;top:545px;font-size:12px;letter-spacing:0.2px">5,00 h</div>
<div class="a" style="left:519px;top:547px;width:40px;height:22px;border:1px solid #b0b3bb;background:linear-gradient(#e9edf3,#fff 35%);"></div>
<div class="t" style="left:566px;top:551px;font-size:12px;">%</div>
<div class="a" style="left:601px;top:547px;width:40px;height:22px;border:1px solid #b0b3bb;background:linear-gradient(#e9edf3,#fff 35%);"></div>
<div class="t" style="left:648px;top:551px;font-size:12px;">h</div>
<div class="a" style="left:1px;top:575px;width:22px;height:22px;border:1px solid #8e8e8e;border-radius:1px;background:#f6f4f4;"><svg width="21" height="21"><defs><linearGradient id="gc" x1="0" y1="0" x2="0" y2="1"><stop offset="0" stop-color="#e2f4e2"/><stop offset="1" stop-color="#a0e2a8"/></linearGradient></defs><circle cx="10.5" cy="10.3" r="7.6" fill="url(#gc)" stroke="#141414" stroke-width="1.6"/><path d="M10.4 3.8 V11.2" stroke="#111" stroke-width="1.6"/><path d="M15.6 10.3 H17 M4 10.3 H5.4 M10.5 15.4 V16.8" stroke="#1a1a1a" stroke-width="1.3"/></svg></div>
<div class="t" style="left:27px;top:576px;font-size:12px;color:#1a3c9a;letter-spacing:-0.4px">4-1</div>
<div class="a" style="left:57px;top:575px;width:22px;height:22px;border:1px solid #9a9a9a;border-radius:1px;background:#f6f4f4;"><svg width="21" height="21"><path d="M3.2 10.8 L8.2 15.4 L17.6 5.9" fill="none" stroke="#4e8e22" stroke-width="3.9" stroke-linejoin="miter" stroke-linecap="butt"/><path d="M3.6 10.9 L8.2 15.1 L17.3 6.1" fill="none" stroke="#86cc3a" stroke-width="2.1" stroke-linejoin="miter" stroke-linecap="butt"/></svg></div>
<div class="t" style="left:79px;top:576px;font-size:12px;color:#1a3c9a;letter-spacing:0.12px"> Projektleitung</div>
<div class="t" style="left:183px;top:576px;font-size:12px;color:#1a3c9a;letter-spacing:0.1px">Einführung</div>
<div class="t" style="left:183px;top:591px;font-size:12px;color:#1a3c9a;letter-spacing:0.1px">Projectile</div>
<div class="t" style="left:266px;top:576px;font-size:12px;letter-spacing:0.3px">CONSULT</div>
<div class="t" style="left:266px;top:591px;font-size:12px;letter-spacing:0.3px">GmbH</div>
<div class="t" style="left:343px;top:576px;font-size:12px;letter-spacing:0.35px">14.10.2009</div>
<div class="t" style="left:405px;top:576px;font-size:12px;letter-spacing:0.45px">24,00 h</div>
<div class="t" style="left:474px;top:576px;font-size:12px;letter-spacing:0.2px">8,00 h</div>
<div class="a" style="left:519px;top:578px;width:40px;height:22px;border:1px solid #b0b3bb;background:linear-gradient(#e9edf3,#fff 35%);"></div>
<div class="t" style="left:566px;top:582px;font-size:12px;">%</div>
<div class="a" style="left:601px;top:578px;width:40px;height:22px;border:1px solid #b0b3bb;background:linear-gradient(#e9edf3,#fff 35%);"></div>
<div class="t" style="left:648px;top:582px;font-size:12px;">h</div>
</body></html>
